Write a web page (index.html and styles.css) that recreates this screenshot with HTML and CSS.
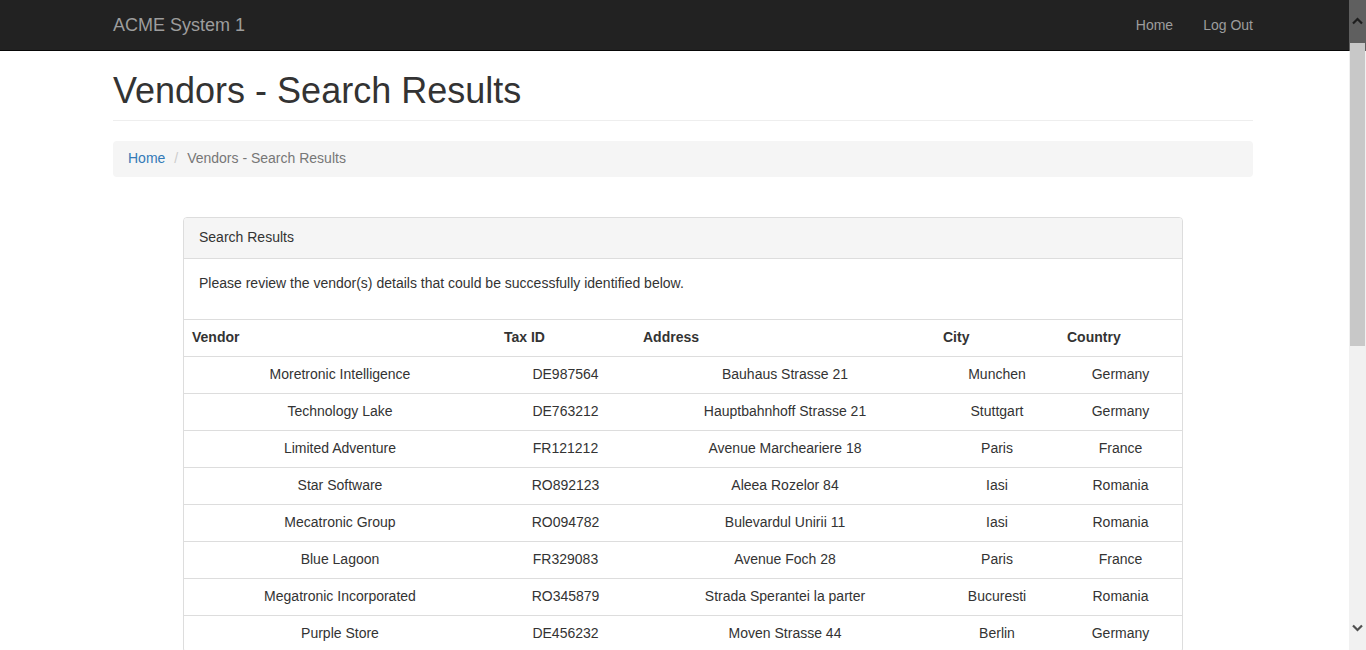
FILE: index.html
```
<!DOCTYPE html>
<html lang="en">
<head>
<meta charset="utf-8">
<title>Vendors - Search Results</title>
<link rel="stylesheet" href="styles.css">
</head>
<body>
<nav class="navbar">
  <div class="container navbar-inner">
    <a class="brand" href="#">ACME System 1</a>
    <ul class="nav">
      <li><a href="#">Home</a></li>
      <li><a href="#">Log Out</a></li>
    </ul>
  </div>
</nav>
<main class="container">
  <div class="page-header">
    <h1>Vendors - Search Results</h1>
  </div>
  <ol class="breadcrumb">
    <li><a href="#">Home</a></li>
    <li class="active">Vendors - Search Results</li>
  </ol>
  <section class="panel">
    <div class="panel-heading">Search Results</div>
    <div class="panel-body">
      <p>Please review the vendor(s) details that could be successfully identified below.</p>
    </div>
    <table class="table">
      <colgroup>
        <col class="c-vendor"><col class="c-tax"><col class="c-addr"><col class="c-city"><col class="c-country">
      </colgroup>
      <thead>
        <tr><th>Vendor</th><th>Tax ID</th><th>Address</th><th>City</th><th>Country</th></tr>
      </thead>
      <tbody>
        <tr><td>Moretronic Intelligence</td><td>DE987564</td><td>Bauhaus Strasse 21</td><td>Munchen</td><td>Germany</td></tr>
        <tr><td>Technology Lake</td><td>DE763212</td><td>Hauptbahnhoff Strasse 21</td><td>Stuttgart</td><td>Germany</td></tr>
        <tr><td>Limited Adventure</td><td>FR121212</td><td>Avenue Marcheariere 18</td><td>Paris</td><td>France</td></tr>
        <tr><td>Star Software</td><td>RO892123</td><td>Aleea Rozelor 84</td><td>Iasi</td><td>Romania</td></tr>
        <tr><td>Mecatronic Group</td><td>RO094782</td><td>Bulevardul Unirii 11</td><td>Iasi</td><td>Romania</td></tr>
        <tr><td>Blue Lagoon</td><td>FR329083</td><td>Avenue Foch 28</td><td>Paris</td><td>France</td></tr>
        <tr><td>Megatronic Incorporated</td><td>RO345879</td><td>Strada Sperantei la parter</td><td>Bucuresti</td><td>Romania</td></tr>
        <tr><td>Purple Store</td><td>DE456232</td><td>Moven Strasse 44</td><td>Berlin</td><td>Germany</td></tr>
      </tbody>
    </table>
  </section>
</main>
<div class="scrollbar" aria-hidden="true">
  <div class="sb-top"></div>
  <div class="sb-thumb"></div>
  <svg class="sb-up" width="17" height="10" viewBox="0 0 17 10"><path d="M4 7.5 L8.5 3 L13 7.5" fill="none" stroke="#1e1e1e" stroke-width="2.2"/></svg>
  <svg class="sb-down" width="17" height="10" viewBox="0 0 17 10"><path d="M4 2.5 L8.5 7 L13 2.5" fill="none" stroke="#505050" stroke-width="2.2"/></svg>
</div>
</body>
</html>
```
FILE: styles.css
```
* { box-sizing: border-box; }
html, body { margin: 0; padding: 0; height: 650px; overflow: hidden; }
body {
  font-family: "Liberation Sans", Arial, Helvetica, sans-serif;
  font-size: 14px;
  line-height: 20px;
  color: #333;
  background: #fff;
}
a { text-decoration: none; }
.container { width: 1170px; margin: 0 auto; padding: 0 15px; }

.navbar {
  height: 51px;
  background: #222;
  border-bottom: 1px solid #080808;
}
.navbar-inner { display: flex; justify-content: space-between; align-items: center; height: 50px; }
.brand { color: #9d9d9d; font-size: 18px; line-height: 20px; padding: 15px 0; }
.nav { list-style: none; margin: 0 -15px 0 0; padding: 0; display: flex; }
.nav a { display: block; padding: 15px; color: #9d9d9d; line-height: 20px; }

.page-header {
  margin: 20px 0 20px;
  padding-bottom: 9px;
  border-bottom: 1px solid #eee;
}
.page-header h1 {
  margin: 0;
  padding-top: 1px;
  font-size: 36px;
  font-weight: 500;
  line-height: 38.6px;
}
.breadcrumb {
  list-style: none;
  margin: 0 0 40px;
  padding: 7px 15px 9px;
  background: #f5f5f5;
  border-radius: 4px;
  display: flex;
  gap: 4px;
}
.breadcrumb a { color: #337ab7; }
.breadcrumb .active { color: #777; }
.breadcrumb li + li::before { content: "/\00a0"; padding: 0 5px; color: #ccc; }

.panel {
  width: 1000px;
  margin: 0 auto;
  border: 1px solid #ddd;
  border-radius: 4px;
  background: #fff;
}
.panel-heading {
  padding: 9px 15px 11px;
  background: #f5f5f5;
  border-bottom: 1px solid #ddd;
  border-radius: 3px 3px 0 0;
}
.panel-body { padding: 14px 15px 16px; }
.panel-body p { margin: 0 0 10px; }

.table { width: 100%; border-collapse: collapse; table-layout: fixed; border-top: 1px solid #ddd; }
.c-vendor { width: 312px; }
.c-tax { width: 139px; }
.c-addr { width: 300px; }
.c-city { width: 124px; }
.c-country { width: 123px; }
.table th { text-align: left; font-weight: bold; padding: 7px 8px 9px; line-height: 20px; border-bottom: 1px solid #ddd; }
.table td { text-align: center; padding: 7px 8px 9px; line-height: 20px; border-top: 1px solid #ddd; }
.table tbody tr:first-child td { border-top: 0; }

.scrollbar {
  position: fixed;
  top: 0; right: 0;
  width: 17px; height: 650px;
  background: #f1f1f1;
}
.sb-top { position: absolute; top: 0; left: 0; width: 17px; height: 51px; background: #5f5f5f; }
.sb-thumb { position: absolute; top: 43px; left: 1px; width: 15px; height: 303px; background: #c8c8c8; }
.sb-up { position: absolute; top: 16px; left: 0; }
.sb-down { position: absolute; top: 623px; left: 0; }
```
